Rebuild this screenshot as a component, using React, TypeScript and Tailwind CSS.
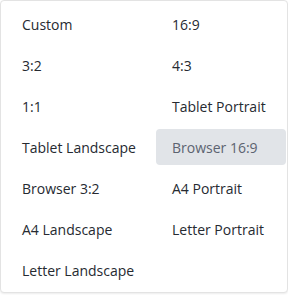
import { useState } from "react";

const options = [
  "Custom",
  "16:9",
  "3:2",
  "4:3",
  "1:1",
  "Tablet Portrait",
  "Tablet Landscape",
  "Browser 16:9",
  "Browser 3:2",
  "A4 Portrait",
  "A4 Landscape",
  "Letter Portrait",
  "Letter Landscape",
];

export default function App() {
  const [active, setActive] = useState("Browser 16:9");

  return (
    <div className="w-[288px] h-[295px] bg-white p-0">
      <div className="h-[293px] rounded-[4px] border border-[#e3e3e3] bg-white p-[5px] shadow-[0_1px_2px_rgba(0,0,0,0.08)] font-['Open_Sans',sans-serif]">
        <div className="grid grid-cols-[130px_130px] gap-x-5 gap-y-[5px]">
          {options.map((o) => (
            <button
              key={o}
              onClick={() => setActive(o)}
              className={`h-9 whitespace-nowrap rounded-[4px] px-4 text-left text-[14px] ${
                active === o
                  ? "bg-[#e1e4e8] text-[#5c6370]"
                  : "text-[#262a31] hover:bg-gray-100"
              }`}
            >
              {o}
            </button>
          ))}
        </div>
      </div>
    </div>
  );
}
